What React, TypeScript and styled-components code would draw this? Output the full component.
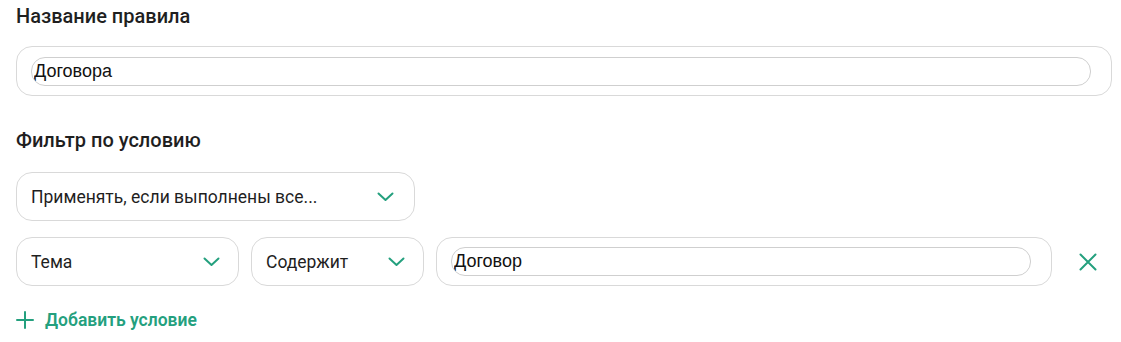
import React from "react";
import styled, { createGlobalStyle } from "styled-components";

const GREEN = "#24a07e";
const BORDER = "#d9d9d9";

const Global = createGlobalStyle`
  html, body { margin: 0; padding: 0; background: #fff; }
  body { font-family: Roboto, "Noto Sans", Arial, sans-serif; color: #1f1f1f; }
`;

const Page = styled.div`
  display: flex;
  flex-direction: column;
  padding: 4px 9px 0 16px;
  width: 1121px;
  box-sizing: border-box;
`;

const Title = styled.h2<{ $mt?: number }>`
  margin: ${(p) => p.$mt ?? 0}px 0 0 0;
  font-size: 20px;
  line-height: 24px;
  font-weight: 500;
  color: #1f1f1f;
`;

const Field = styled.div<{ $w?: number; $h?: number; $mt?: number }>`
  box-sizing: border-box;
  display: flex;
  align-items: center;
  height: ${(p) => p.$h ?? 49}px;
  ${(p) => (p.$w ? `width: ${p.$w}px; flex: none;` : "")}
  margin-top: ${(p) => p.$mt ?? 0}px;
  border: 1px solid ${BORDER};
  border-radius: 16px;
  background: #fff;
  padding: 0 20px 0 14px;
`;

const TextInput = styled.input`
  box-sizing: border-box;
  flex: 1;
  min-width: 0;
  height: 29px;
  border: 1px solid #cfcfcf;
  border-radius: 14px;
  padding: 0 2px;
  font-family: "Liberation Sans", Arial, sans-serif;
  font-size: 18px;
  color: #111;
  background: #fff;
  outline: none;
`;

const SelectText = styled.span`
  flex: 1;
  font-size: 17.5px;
  line-height: 22px;
  color: #1f1f1f;
  white-space: nowrap;
  overflow: hidden;
`;

const Row = styled.div`
  display: flex;
  align-items: center;
  gap: 12px;
  margin-top: 16px;
`;

const IconButton = styled.button`
  border: 0;
  background: none;
  padding: 0;
  margin-left: 10px;
  width: 28px;
  height: 28px;
  display: flex;
  align-items: center;
  justify-content: center;
  cursor: pointer;
`;

const AddLink = styled.button`
  display: flex;
  align-items: center;
  gap: 11px;
  margin-top: 22px;
  border: 0;
  background: none;
  padding: 0;
  font-family: Roboto, "Noto Sans", Arial, sans-serif;
  font-size: 17.5px;
  line-height: 24px;
  font-weight: 600;
  color: ${GREEN};
  cursor: pointer;
  align-self: flex-start;
`;

const Chevron = () => (
  <svg width="17" height="10" viewBox="0 0 17 10" fill="none">
    <polyline points="1.5,1.5 8.5,8 15.5,1.5" stroke={GREEN} strokeWidth="2" strokeLinecap="round" strokeLinejoin="round" />
  </svg>
);

const Cross = () => (
  <svg width="18" height="18" viewBox="0 0 18 18" fill="none">
    <path d="M1.5 1.5 L16.5 16.5 M16.5 1.5 L1.5 16.5" stroke={GREEN} strokeWidth="2" strokeLinecap="round" />
  </svg>
);

const Plus = () => (
  <svg width="18" height="18" viewBox="0 0 18 18" fill="none">
    <path d="M9 1 V17 M1 9 H17" stroke={GREEN} strokeWidth="2" strokeLinecap="round" />
  </svg>
);

export default function App() {
  return (
    <>
      <Global />
      <Page>
        <Title>Название правила</Title>
        <Field $h={50} $mt={18}>
          <TextInput defaultValue="Договора" />
        </Field>

        <Title $mt={32}>Фильтр по условию</Title>
        <Field $w={399} $mt={20}>
          <SelectText>Применять, если выполнены все...</SelectText>
          <Chevron />
        </Field>

        <Row>
          <Field $w={223} style={{ paddingRight: 18 }}>
            <SelectText>Тема</SelectText>
            <Chevron />
          </Field>
          <Field $w={173} style={{ paddingRight: 18 }}>
            <SelectText>Содержит</SelectText>
            <Chevron />
          </Field>
          <Field $w={616}>
            <TextInput defaultValue="Договор" />
          </Field>
          <IconButton aria-label="Удалить">
            <Cross />
          </IconButton>
        </Row>

        <AddLink>
          <Plus />
          Добавить условие
        </AddLink>
      </Page>
    </>
  );
}
